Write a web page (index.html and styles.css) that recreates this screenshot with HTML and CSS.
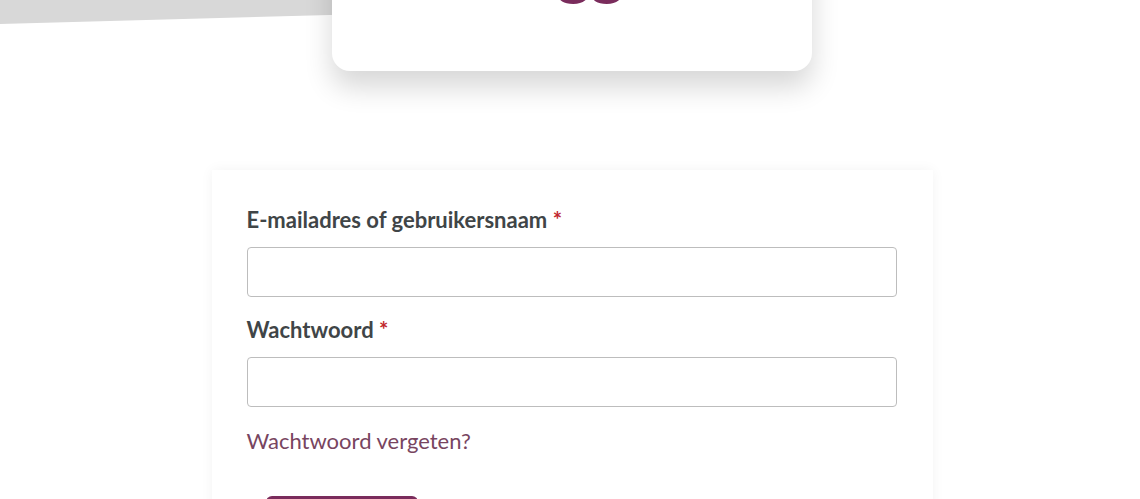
FILE: index.html
```html
<!DOCTYPE html>
<html lang="nl">
<head>
<meta charset="utf-8">
<title>Inloggen</title>
<link rel="stylesheet" href="styles.css">
</head>
<body>
<div class="backdrop"></div>
<main class="page">
  <section class="hero-card">
    <h1 class="hero-title">Inloggen</h1>
  </section>
  <form class="login-card">
    <div class="field">
      <label class="field-label" for="user">E-mailadres of gebruikersnaam <span class="req">*</span></label>
      <input class="field-input" id="user" type="text">
    </div>
    <div class="field">
      <label class="field-label" for="pass">Wachtwoord <span class="req">*</span></label>
      <input class="field-input" id="pass" type="password">
    </div>
    <a class="forgot" href="#">Wachtwoord vergeten?</a>
    <div class="actions">
      <button class="submit" type="button">Inloggen</button>
    </div>
  </form>
</main>
</body>
</html>
```
FILE: styles.css
```css
html, body {
  margin: 0;
  padding: 0;
  height: 100%;
  overflow: hidden;
  background: #ffffff;
  font-family: Lato, "Open Sans", Arial, sans-serif;
}
body { position: relative; }
.backdrop {
  position: absolute;
  top: 0;
  left: 0;
  width: 100%;
  height: 30px;
  background: #d8d8d8;
  clip-path: polygon(0 0, 700px 0, 700px 5px, 0 24px);
  z-index: 0;
}
.page {
  position: relative;
  z-index: 1;
  display: flex;
  flex-direction: column;
  align-items: center;
  padding-left: 4px;
  margin-top: -129px;
}
.hero-card {
  width: 480px;
  height: 200px;
  background: #fff;
  border-radius: 18px;
  box-shadow: 0 16px 28px rgba(0,0,0,0.16);
  display: flex;
  align-items: flex-end;
  justify-content: center;
  box-sizing: border-box;
  padding-bottom: 70px;
}
.hero-title {
  margin: 0;
  font-size: 64px;
  font-weight: 700;
  line-height: 1;
  color: #7a2c5c;
}
.login-card {
  margin-top: 99px;
  width: 721px;
  box-sizing: border-box;
  background: #fff;
  padding: 37px 36px 40px 35px;
  box-shadow: 0 0 12px rgba(0,0,0,0.05);
  display: flex;
  flex-direction: column;
}
.field {
  display: flex;
  flex-direction: column;
  margin-bottom: 20px;
}
.field-label {
  font-size: 22px;
  font-weight: 700;
  color: #404547;
  line-height: 26px;
  margin-bottom: 14px;
}
.req { color: #c1272d; }
.field-input {
  height: 50px;
  box-sizing: border-box;
  border: 1px solid #bdbdbd;
  border-radius: 4px;
  background: #fff;
  font-size: 18px;
  padding: 0 12px;
}
.forgot {
  font-size: 22px;
  color: #78455f;
  text-decoration: none;
  line-height: 26px;
  margin-top: 1px;
}
.actions {
  margin-top: 42px;
  padding-left: 19px;
  display: flex;
}
.submit {
  width: 152px;
  height: 48px;
  border: 0;
  border-radius: 6px;
  background: #7a2c5c;
  color: #fff;
  font-family: inherit;
  font-size: 18px;
  font-weight: 700;
}
```
